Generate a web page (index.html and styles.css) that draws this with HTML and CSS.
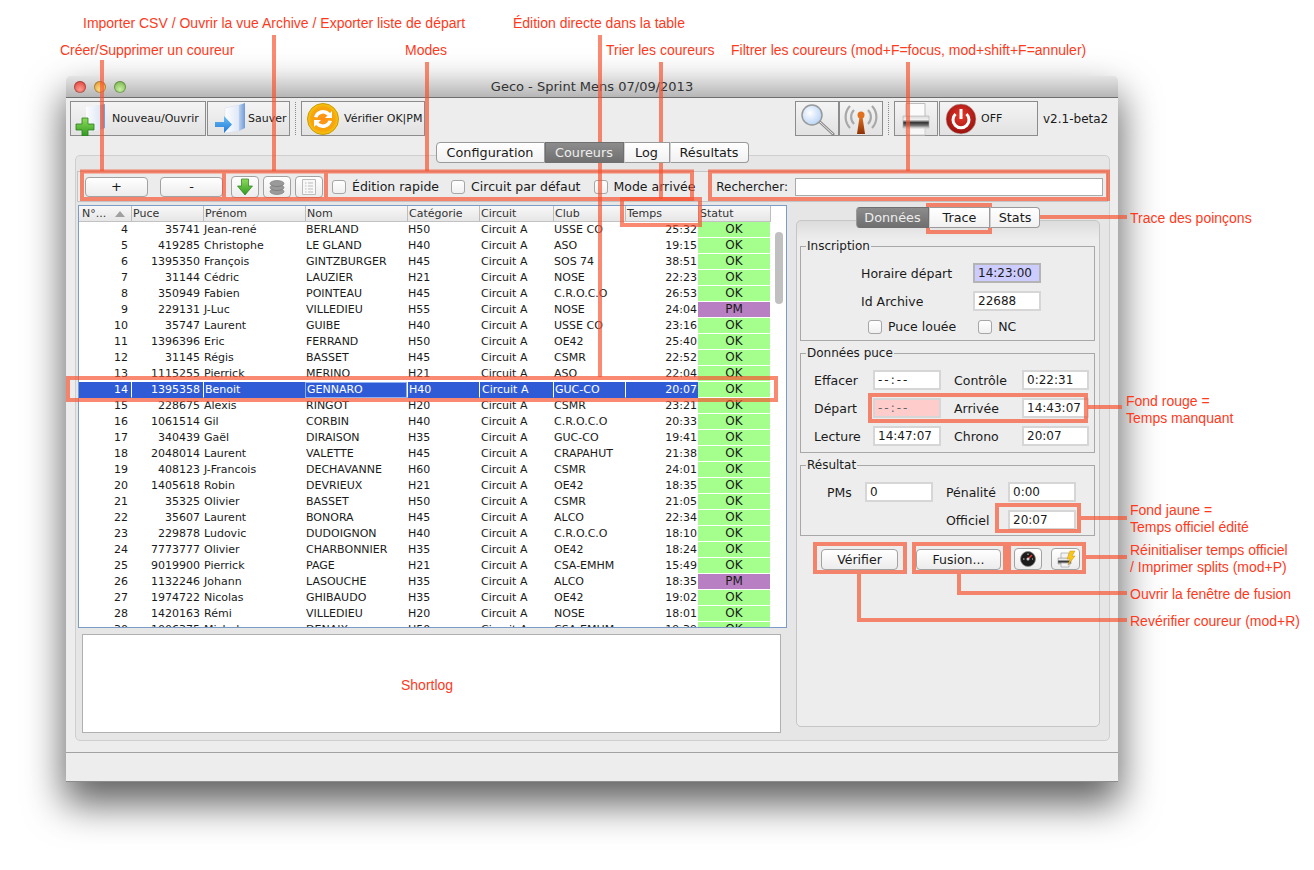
FILE: index.html
```html
<!DOCTYPE html>
<html lang="fr">
  <head>
    <meta charset="UTF-8" />
    <title>Geco - Sprint Mens 07/09/2013</title>
    <link rel="stylesheet" href="styles.css">
  </head>
  <body>
    <svg class="defs" width="0" height="0">
      <defs>
        <linearGradient id="gFolder" x1="0" y1="0" x2="1" y2="0"><stop offset="0" stop-color="#fdfdff"/><stop offset="1" stop-color="#dfe8f6"/></linearGradient>
        <linearGradient id="gSpine" x1="0" y1="0" x2="1" y2="0"><stop offset="0" stop-color="#b9d0ee"/><stop offset="1" stop-color="#6f9ad8"/></linearGradient>
        <linearGradient id="gGreen" x1="0" y1="0" x2="0" y2="1"><stop offset="0" stop-color="#8fdc5a"/><stop offset="1" stop-color="#2f9a22"/></linearGradient>
        <linearGradient id="gBlue" x1="0" y1="0" x2="0" y2="1"><stop offset="0" stop-color="#6cc0f5"/><stop offset="1" stop-color="#1f78d8"/></linearGradient>
        <radialGradient id="gOrange" cx=".5" cy=".5" r=".55"><stop offset="0" stop-color="#ff8f1a"/><stop offset=".7" stop-color="#f7a70c"/><stop offset="1" stop-color="#f6d90e"/></radialGradient>
        <radialGradient id="gRed" cx=".5" cy=".4" r=".6"><stop offset="0" stop-color="#e8392c"/><stop offset="1" stop-color="#98100c"/></radialGradient>
        <radialGradient id="gLens" cx=".4" cy=".4" r=".6"><stop offset="0" stop-color="#ffffff"/><stop offset="1" stop-color="#bcd6f7"/></radialGradient>
        <linearGradient id="gMast" x1="0" y1="0" x2="0" y2="1"><stop offset="0" stop-color="#e0701c"/><stop offset="1" stop-color="#8c3208"/></linearGradient>
        <linearGradient id="gPrinter" x1="0" y1="0" x2="0" y2="1"><stop offset="0" stop-color="#d8d8d8"/><stop offset=".3" stop-color="#f0f0f0"/><stop offset=".55" stop-color="#333"/><stop offset=".8" stop-color="#777"/><stop offset="1" stop-color="#ddd"/></linearGradient>
      </defs>
    </svg>

    <div class="window">
      <div class="titlebar">
        <span class="light red"></span>
        <span class="light orange"></span>
        <span class="light green"></span>
        <span class="title">Geco - Sprint Mens 07/09/2013</span>
      </div>

      <div class="toolbar">
        <button class="tool tool-new">
          <svg width="36" height="34" viewBox="0 0 36 34"><path d="M14 5 L28 3 L28 28 L14 30Z" fill="url(#gFolder)"/><path d="M28 3 L33 2 L33 26 L28 28Z" fill="url(#gSpine)"/><path d="M10 16h6v6h6v6h-6v6h-6v-6H4v-6h6z" fill="url(#gGreen)" stroke="#2a7d1c" stroke-width=".8"/></svg>
          Nouveau/Ouvrir
        </button>
        <button class="tool tool-save">
          <svg width="36" height="34" viewBox="0 0 36 34"><path d="M14 6 L28 3 L28 29 L14 31Z" fill="url(#gFolder)" stroke="#d4dcea" stroke-width=".5"/><path d="M28 3 L34 1 L34 26 L28 29Z" fill="url(#gSpine)"/><path d="M4 20h9v-6l8 8.500-8 8.500v-6H4z" fill="url(#gBlue)"/></svg>
          Sauver
        </button>
        <span class="sep"></span>
        <button class="tool tool-check">
          <svg width="34" height="34" viewBox="0 0 34 34"><circle cx="17" cy="17" r="15.500" fill="url(#gOrange)" stroke="#c99a08"/><path d="M8 15a9.500 9.500 0 0 1 16-4l2-2v7h-7l2.500-2.500a6 6 0 0 0-10 2z" fill="#fff"/><path d="M26 19a9.500 9.500 0 0 1-16 4l-2 2v-7h7l-2.500 2.500a6 6 0 0 0 10-2z" fill="#fff"/></svg>
          Vérifier OK|PM
        </button>
        <div class="toolbar-right">
          <button class="tool tool-icon">
            <svg width="42" height="34" viewBox="0 0 42 34"><path d="M24 20 L37 32" stroke="#8a8a8a" stroke-width="3" stroke-linecap="round"/><path d="M24 20 L37 32" stroke="#eee" stroke-width="1"/><circle cx="16" cy="13" r="10" fill="url(#gLens)" stroke="#999" stroke-width="1.500"/></svg>
          </button>
          <button class="tool tool-icon">
            <svg width="42" height="34" viewBox="0 0 42 34"><g fill="none" stroke="#a8a8a8" stroke-width="2.200"><path d="M14 8a10 10 0 0 0 0 14"/><path d="M28 8a10 10 0 0 1 0 14"/><path d="M10 4a16 16 0 0 0 0 22"/><path d="M32 4a16 16 0 0 1 0 22"/></g><circle cx="21" cy="13" r="3.500" fill="#e0701c"/><path d="M19.500 15h3L25 32H17z" fill="url(#gMast)"/></svg>
          </button>
          <span class="sep"></span>
          <button class="tool tool-icon">
            <svg width="42" height="34" viewBox="0 0 42 34"><path d="M11 1.500h19v13H11z" fill="#fbfbfb" stroke="#bdbdbd"/><path d="M8 14h26v12H8z" fill="url(#gPrinter)" stroke="#b0b0b0" stroke-width=".6"/><path d="M11 26h19v7H11z" fill="#f7f7f7" stroke="#cfcfcf"/></svg>
          </button>
          <button class="tool tool-off">
            <svg width="32" height="32" viewBox="0 0 32 32"><circle cx="16" cy="16" r="15" fill="url(#gRed)" stroke="#b8b8b8" stroke-width=".6"/><path d="M10.500 11a8 8 0 1 0 11 0" fill="none" stroke="#fff" stroke-width="3"/><path d="M16 6v10" stroke="#fff" stroke-width="3"/></svg>
            OFF
          </button>
          <span class="version">v2.1-beta2</span>
        </div>
      </div>

      <div class="tabs tabs-main">
        <span class="tab tab-config">Configuration</span><span class="tab tab-active tab-coureurs">Coureurs</span><span class="tab tab-log">Log</span><span class="tab tab-results">Résultats</span>
      </div>

      <div class="panel">
        <div class="filters">
          <div class="crud">
            <button class="btn btn-crud">+</button>
            <button class="btn btn-crud">-</button>
          </div>
          <div class="io">
            <button class="btn btn-io">
              <svg width="18" height="18" viewBox="0 0 18 18"><path d="M5.500 1h7v7h4L9 17 1.500 8h4z" fill="url(#gGreen)" stroke="#2a7d1c" stroke-width=".7"/></svg>
            </button>
            <button class="btn btn-io">
              <svg width="18" height="18" viewBox="0 0 18 18"><g fill="#9a9a9a" stroke="#707070" stroke-width=".6"><ellipse cx="9" cy="13.500" rx="7" ry="3"/><ellipse cx="9" cy="9.500" rx="7" ry="3"/><ellipse cx="9" cy="5.500" rx="7" ry="3"/></g></svg>
            </button>
            <button class="btn btn-io">
              <svg width="18" height="18" viewBox="0 0 18 18"><path d="M2.500 1.500h13v15h-13z" fill="#f8f8f8" stroke="#bbb"/><path d="M5 5h1.500M8 5h5M5 8h1.500M8 8h5M5 11h1.500M8 11h5M5 14h1.500M8 14h5" stroke="#bdbdbd"/></svg>
            </button>
          </div>
          <label class="check check-fast"><input type="checkbox" />Édition rapide</label>
          <label class="check check-default"><input type="checkbox" />Circuit par défaut</label>
          <label class="check check-arrival"><input type="checkbox" />Mode arrivée</label>
          <label class="search">Rechercher:<input type="text" /></label>
        </div>

        <div class="content">
          <div class="left">
            <div class="runners">
              <table>
                <colgroup>
                  <col class="c-num" /><col class="c-chip" /><col class="c-first" /><col class="c-last" /><col class="c-cat" /><col class="c-course" /><col class="c-club" /><col class="c-time" /><col class="c-status" /><col class="c-fill" />
                </colgroup>
                <thead>
                  <tr><th class="th-num">N°...<span class="sort"></span></th><th>Puce</th><th>Prénom</th><th>Nom</th><th>Catégorie</th><th>Circuit</th><th>Club</th><th>Temps</th><th>Statut</th><th class="th-fill"></th></tr>
                </thead>
                <tbody>
                  <tr><td class="num">4</td><td class="num">35741</td><td>Jean-rené</td><td>BERLAND</td><td>H50</td><td class="crs">Circuit A</td><td>USSE CO</td><td class="time">25:32</td><td class="ok">OK</td><td></td></tr>
                  <tr><td class="num">5</td><td class="num">419285</td><td>Christophe</td><td>LE GLAND</td><td>H40</td><td class="crs">Circuit A</td><td>ASO</td><td class="time">19:15</td><td class="ok">OK</td><td></td></tr>
                  <tr><td class="num">6</td><td class="num">1395350</td><td>François</td><td>GINTZBURGER</td><td>H45</td><td class="crs">Circuit A</td><td>SOS 74</td><td class="time">38:51</td><td class="ok">OK</td><td></td></tr>
                  <tr><td class="num">7</td><td class="num">31144</td><td>Cédric</td><td>LAUZIER</td><td>H21</td><td class="crs">Circuit A</td><td>NOSE</td><td class="time">22:23</td><td class="ok">OK</td><td></td></tr>
                  <tr><td class="num">8</td><td class="num">350949</td><td>Fabien</td><td>POINTEAU</td><td>H45</td><td class="crs">Circuit A</td><td>C.R.O.C.O</td><td class="time">26:53</td><td class="ok">OK</td><td></td></tr>
                  <tr><td class="num">9</td><td class="num">229131</td><td>J-Luc</td><td>VILLEDIEU</td><td>H55</td><td class="crs">Circuit A</td><td>NOSE</td><td class="time">24:04</td><td class="pm">PM</td><td></td></tr>
                  <tr><td class="num">10</td><td class="num">35747</td><td>Laurent</td><td>GUIBE</td><td>H40</td><td class="crs">Circuit A</td><td>USSE CO</td><td class="time">23:16</td><td class="ok">OK</td><td></td></tr>
                  <tr><td class="num">11</td><td class="num">1396396</td><td>Eric</td><td>FERRAND</td><td>H50</td><td class="crs">Circuit A</td><td>OE42</td><td class="time">25:40</td><td class="ok">OK</td><td></td></tr>
                  <tr><td class="num">12</td><td class="num">31145</td><td>Régis</td><td>BASSET</td><td>H45</td><td class="crs">Circuit A</td><td>CSMR</td><td class="time">22:52</td><td class="ok">OK</td><td></td></tr>
                  <tr><td class="num">13</td><td class="num">1115255</td><td>Pierrick</td><td>MERINO</td><td>H21</td><td class="crs">Circuit A</td><td>ASO</td><td class="time">22:04</td><td class="ok">OK</td><td></td></tr>
                  <tr class="selected"><td class="num">14</td><td class="num">1395358</td><td>Benoit</td><td class="focus">GENNARO</td><td>H40</td><td class="crs">Circuit A</td><td>GUC-CO</td><td class="time">20:07</td><td class="ok">OK</td><td></td></tr>
                  <tr><td class="num">15</td><td class="num">228675</td><td>Alexis</td><td>RINGOT</td><td>H20</td><td class="crs">Circuit A</td><td>CSMR</td><td class="time">23:21</td><td class="ok">OK</td><td></td></tr>
                  <tr><td class="num">16</td><td class="num">1061514</td><td>Gil</td><td>CORBIN</td><td>H40</td><td class="crs">Circuit A</td><td>C.R.O.C.O</td><td class="time">20:33</td><td class="ok">OK</td><td></td></tr>
                  <tr><td class="num">17</td><td class="num">340439</td><td>Gaël</td><td>DIRAISON</td><td>H35</td><td class="crs">Circuit A</td><td>GUC-CO</td><td class="time">19:41</td><td class="ok">OK</td><td></td></tr>
                  <tr><td class="num">18</td><td class="num">2048014</td><td>Laurent</td><td>VALETTE</td><td>H45</td><td class="crs">Circuit A</td><td>CRAPAHUT</td><td class="time">21:38</td><td class="ok">OK</td><td></td></tr>
                  <tr><td class="num">19</td><td class="num">408123</td><td>J-Francois</td><td>DECHAVANNE</td><td>H60</td><td class="crs">Circuit A</td><td>CSMR</td><td class="time">24:01</td><td class="ok">OK</td><td></td></tr>
                  <tr><td class="num">20</td><td class="num">1405618</td><td>Robin</td><td>DEVRIEUX</td><td>H21</td><td class="crs">Circuit A</td><td>OE42</td><td class="time">18:35</td><td class="ok">OK</td><td></td></tr>
                  <tr><td class="num">21</td><td class="num">35325</td><td>Olivier</td><td>BASSET</td><td>H50</td><td class="crs">Circuit A</td><td>CSMR</td><td class="time">21:05</td><td class="ok">OK</td><td></td></tr>
                  <tr><td class="num">22</td><td class="num">35607</td><td>Laurent</td><td>BONORA</td><td>H45</td><td class="crs">Circuit A</td><td>ALCO</td><td class="time">22:34</td><td class="ok">OK</td><td></td></tr>
                  <tr><td class="num">23</td><td class="num">229878</td><td>Ludovic</td><td>DUDOIGNON</td><td>H40</td><td class="crs">Circuit A</td><td>C.R.O.C.O</td><td class="time">18:10</td><td class="ok">OK</td><td></td></tr>
                  <tr><td class="num">24</td><td class="num">7773777</td><td>Olivier</td><td>CHARBONNIER</td><td>H35</td><td class="crs">Circuit A</td><td>OE42</td><td class="time">18:24</td><td class="ok">OK</td><td></td></tr>
                  <tr><td class="num">25</td><td class="num">9019900</td><td>Pierrick</td><td>PAGE</td><td>H21</td><td class="crs">Circuit A</td><td>CSA-EMHM</td><td class="time">15:49</td><td class="ok">OK</td><td></td></tr>
                  <tr><td class="num">26</td><td class="num">1132246</td><td>Johann</td><td>LASOUCHE</td><td>H35</td><td class="crs">Circuit A</td><td>ALCO</td><td class="time">18:35</td><td class="pm">PM</td><td></td></tr>
                  <tr><td class="num">27</td><td class="num">1974722</td><td>Nicolas</td><td>GHIBAUDO</td><td>H35</td><td class="crs">Circuit A</td><td>OE42</td><td class="time">19:02</td><td class="ok">OK</td><td></td></tr>
                  <tr><td class="num">28</td><td class="num">1420163</td><td>Rémi</td><td>VILLEDIEU</td><td>H20</td><td class="crs">Circuit A</td><td>NOSE</td><td class="time">18:01</td><td class="ok">OK</td><td></td></tr>
                  <tr><td class="num">30</td><td class="num">1006375</td><td>Michel</td><td>DENAIX</td><td>H50</td><td class="crs">Circuit A</td><td>CSA-EMHM</td><td class="time">19:39</td><td class="ok">OK</td><td></td></tr>
                </tbody>
              </table>
              <div class="thumb"></div>
            </div>
            <div class="shortlog"></div>
          </div>

          <div class="right">
            <div class="tabs tabs-side">
              <span class="tab tab-active tab-data">Données</span><span class="tab tab-trace">Trace</span><span class="tab tab-stats">Stats</span>
            </div>
            <div class="side-panel">
              <fieldset class="group group-reg">
                <legend>Inscription</legend>
                <div class="grid grid-reg">
                  <label>Horaire départ</label><input class="field field-start" value="14:23:00" />
                  <label>Id Archive</label><input class="field" value="22688" />
                </div>
                <div class="reg-checks">
                  <label class="check"><input type="checkbox" />Puce louée</label>
                  <label class="check"><input type="checkbox" />NC</label>
                </div>
              </fieldset>
              <fieldset class="group group-chip">
                <legend>Données puce</legend>
                <div class="grid grid-chip">
                  <label>Effacer</label><input class="field field-empty" value="--:--" />
                  <label class="second">Contrôle</label><input class="field" value="0:22:31" />
                  <label>Départ</label><input class="field field-empty field-missing" value="--:--" />
                  <label class="second">Arrivée</label><input class="field" value="14:43:07" />
                  <label>Lecture</label><input class="field" value="14:47:07" />
                  <label class="second">Chrono</label><input class="field" value="20:07" />
                </div>
              </fieldset>
              <fieldset class="group group-result">
                <legend>Résultat</legend>
                <div class="grid grid-result">
                  <label>PMs</label><input class="field" value="0" />
                  <label class="second">Pénalité</label><input class="field" value="0:00" />
                  <span></span><span></span>
                  <label class="second">Officiel</label><input class="field" value="20:07" />
                </div>
              </fieldset>
              <div class="actions">
                <button class="btn btn-verify">Vérifier</button>
                <button class="btn btn-merge">Fusion...</button>
                <button class="btn btn-small btn-clock">
                  <svg width="18" height="18" viewBox="0 0 18 18"><circle cx="9" cy="9" r="7.500" fill="#1c1c1c" stroke="#888" stroke-width=".8"/><path d="M9 9 L13 5" stroke="#e33" stroke-width="1.400"/><path d="M4 9h1.500M9 3.500V5M13 9h1" stroke="#ddd"/><circle cx="9" cy="9" r="1.500" fill="#ccc"/></svg>
                </button>
                <button class="btn btn-small btn-split">
                  <svg width="20" height="18" viewBox="0 0 20 18"><path d="M5 3h8v6H5z" fill="#f4f4f4" stroke="#999" stroke-width=".6"/><path d="M2 8h13v6H2z" fill="url(#gPrinter)" stroke="#888" stroke-width=".5"/><path d="M5 13h8v4H5z" fill="#f4f4f4" stroke="#999" stroke-width=".6"/><path d="M14 1h5l-3 5h3l-7 9 2-6h-3z" fill="#f8c818" stroke="#d08c10" stroke-width=".5"/></svg>
                </button>
              </div>
            </div>
          </div>
        </div>
      </div>

      <div class="statusbar"></div>
    </div>

    <!-- annotations par dessus la capture -->
    <svg class="marks" width="1314" height="870" viewBox="0 0 1314 870">
      <g class="mark-lines">
        <path d="M102 60V171M274 35V171M427 62V171M600 35V377M661 62V199M908 62V171" />
        <path d="M992 217H1127M1088 407H1122M1081 518H1127M1086 557H1127M959 574V593H1127M859 574V620H1127" />
        <path d="M82 171.500H692V199H82ZM224 171.500V199M326 171.500V199" />
        <path d="M710 171.500H1108V199H710Z" />
        <path d="M622 199H700V225H622Z" />
        <path d="M928 205H990V232H928Z" />
        <path d="M68 378H776V400H68Z" />
        <path d="M870 395H1086V421H870Z" />
        <path d="M997 505H1079V531H997Z" />
        <path d="M815 544H905V572H815Z" />
        <path d="M914 544H1005V572H914Z" />
        <path d="M1009 544H1084V572H1009Z" />
      </g>
    </svg>
    <span class="note n-import">Importer CSV / Ouvrir la vue Archive / Exporter liste de départ</span>
    <span class="note n-edit">Édition directe dans la table</span>
    <span class="note n-create">Créer/Supprimer un coureur</span>
    <span class="note n-modes">Modes</span>
    <span class="note n-sort">Trier les coureurs</span>
    <span class="note n-filter">Filtrer les coureurs (mod+F=focus, mod+shift+F=annuler)</span>
    <span class="note n-trace">Trace des poinçons</span>
    <span class="note n-red">Fond rouge =<br />Temps manquant</span>
    <span class="note n-yellow">Fond jaune =<br />Temps officiel édité</span>
    <span class="note n-reset">Réinitialiser temps officiel<br />/ Imprimer splits (mod+P)</span>
    <span class="note n-merge">Ouvrir la fenêtre de fusion</span>
    <span class="note n-recheck">Revérifier coureur (mod+R)</span>
    <span class="note n-shortlog">Shortlog</span>
  </body>
</html>
```

FILE: styles.css
```css
html,
body {
  margin: 0;
  padding: 0;
}

body {
  position: relative;
  width: 1314px;
  height: 870px;
  overflow: hidden;
  background: #fff;
  font-family: "DejaVu Sans", sans-serif;
  color: #1a1a1a;
}

.defs {
  position: absolute;
}

button {
  font-family: inherit;
  color: inherit;
  padding: 0;
}

/* WINDOW */

.window {
  position: absolute;
  left: 66px;
  top: 76px;
  width: 1052px;
  height: 706px;
  box-sizing: border-box;
  display: flex;
  flex-direction: column;
  background: #ededed;
  border-radius: 5px 5px 0 0;
  box-shadow: 0 20px 38px 2px rgba(0, 0, 0, 0.62);
}

.titlebar {
  position: relative;
  flex: none;
  height: 21px;
  display: flex;
  align-items: center;
  gap: 8px;
  padding-left: 8px;
  background: linear-gradient(#e4e4e4, #b6b6b6);
  border-bottom: 1px solid #6e6e6e;
  border-radius: 5px 5px 0 0;
}

.light {
  width: 12px;
  height: 12px;
  border-radius: 50%;
  box-shadow: inset 0 0 0 1px rgba(0, 0, 0, 0.25);
}

.red {
  background: radial-gradient(circle at 50% 70%, #ff9a90, #d8332a);
}

.orange {
  background: radial-gradient(circle at 50% 70%, #ffe08a, #d98a1c);
}

.green {
  background: radial-gradient(circle at 50% 70%, #c8f0a0, #68a83c);
}

.title {
  position: absolute;
  left: 0;
  right: 0;
  text-align: center;
  font-size: 13px;
  color: #333;
}

/* TOOLBAR */

.toolbar {
  flex: none;
  height: 35px;
  margin-top: 3px;
  padding-left: 4px;
  display: flex;
  align-items: stretch;
}

.toolbar-right {
  display: flex;
  align-items: stretch;
  margin-left: auto;
}

.tool {
  display: flex;
  align-items: center;
  box-sizing: border-box;
  height: 35px;
  font-size: 11px;
  border: 1px solid #8c8c8c;
  background: linear-gradient(#f4f4f4, #e2e2e2);
  white-space: nowrap;
}

.tool-new {
  width: 136px;
  gap: 4px;
  padding-left: 1px;
}

.tool-save {
  width: 83px;
  gap: 1px;
  padding-left: 3px;
  margin-left: 1px;
}

.tool-check {
  width: 124px;
  gap: 4px;
  padding-left: 4px;
}

.tool-icon {
  width: 44px;
  justify-content: center;
  padding: 0;
}

.tool-off {
  width: 99px;
  gap: 4px;
  padding-left: 5px;
  margin-left: 1px;
}

.sep {
  width: 0;
  margin: 1px 5px;
  border-left: 1px dotted #8a8a8a;
}

.version {
  width: 80px;
  padding-left: 5px;
  box-sizing: border-box;
  align-self: center;
  font-size: 12px;
}

/* TABS */

.tabs {
  display: flex;
  justify-content: center;
  position: relative;
  z-index: 1;
  font-size: 12.8px;
}

.tabs-main {
  height: 21px;
  margin-top: 6px;
}

.tab {
  box-sizing: border-box;
  display: flex;
  align-items: center;
  justify-content: center;
  height: 21px;
  background: linear-gradient(#fff, #f1f1f1);
  border: 1px solid #9a9a9a;
  border-left: 1px solid #d0d0d0;
}

.tab:first-child {
  border-left: 1px solid #9a9a9a;
  border-radius: 4px 0 0 4px;
}

.tab:last-child {
  border-radius: 0 4px 4px 0;
}

.tab-active {
  color: #eee;
  background: linear-gradient(#8c8c8c, #6f6f6f);
  border-color: #6f6f6f;
}

.tab-config { width: 109px; }
.tab-coureurs { width: 79px; }
.tab-log { width: 46px; }
.tab-results { width: 79px; }
.tab-data { width: 73px; }
.tab-trace { width: 61px; }
.tab-stats { width: 50px; }

/* PANEL */

.panel {
  flex: none;
  box-sizing: border-box;
  width: 1035px;
  height: 586px;
  margin: -8px 0 0 9px;
  padding: 15px 1px 0;
  background: #e6e6e6;
  border: 1px solid #cfcfcf;
  border-radius: 5px;
}

.filters {
  display: flex;
  align-items: center;
  box-sizing: border-box;
  height: 31px;
  width: 1031px;
  background: #ececec;
  border: 1px solid #c4c4c4;
  font-size: 12.5px;
}

.crud {
  display: flex;
  gap: 12px;
  margin-left: 7px;
}

.btn {
  box-sizing: border-box;
  display: flex;
  align-items: center;
  justify-content: center;
  background: linear-gradient(#fff, #ececec);
  border: 1px solid #a2a2a2;
  border-radius: 4px;
  font-size: 12.5px;
}

.btn-crud {
  width: 63px;
  height: 20px;
  font-size: 13px;
}

.io {
  display: flex;
  gap: 4px;
  margin-left: 8px;
}

.btn-io {
  width: 28px;
  height: 22px;
}

.check {
  display: flex;
  align-items: center;
  gap: 6px;
  white-space: nowrap;
}

input[type="checkbox"] {
  appearance: none;
  box-sizing: border-box;
  flex: none;
  width: 14px;
  height: 14px;
  margin: 0;
  background: linear-gradient(#fff, #f0f0f0);
  border: 1px solid #a6a6a6;
  border-radius: 3px;
}

.check-fast { margin-left: 9px; }
.check-default { margin-left: 12px; }
.check-arrival { margin-left: 13px; }

.search {
  flex: none;
  display: flex;
  align-items: center;
  gap: 7px;
  margin-left: auto;
  margin-right: 4px;
  font-size: 12px;
  white-space: nowrap;
}

.search input {
  box-sizing: border-box;
  width: 308px;
  height: 18px;
  border: 1px solid #aaa;
  background: #fff;
}

/* TABLE */

.content {
  display: flex;
  gap: 9px;
  margin-top: 3px;
}

.left {
  width: 709px;
  margin-left: 1px;
}

.runners {
  position: relative;
  box-sizing: border-box;
  height: 423px;
  overflow: hidden;
  background: #fff;
  border: 1px solid #7c9cc8;
}

.runners table {
  table-layout: fixed;
  width: 707px;
  border-spacing: 0;
  font-size: 11px;
}

.c-num { width: 52px; }
.c-chip { width: 72px; }
.c-first { width: 102px; }
.c-last { width: 102px; }
.c-cat { width: 72px; }
.c-course { width: 74px; }
.c-club { width: 72px; }
.c-time { width: 73px; }
.c-status { width: 72px; }
.c-fill { width: 16px; }

.runners th {
  height: 15px;
  padding: 0 0 0 2px;
  text-align: left;
  font-weight: normal;
  color: #333;
  line-height: 15px;
  background: linear-gradient(#f8f8f8, #e6e6e6);
  border-bottom: 1px solid #c2c2c2;
  box-shadow: inset 1px 0 0 #bdbdbd;
}

.runners th.th-num {
  position: relative;
  padding-left: 3px;
  box-shadow: none;
}

.runners th.th-fill {
  background: #fff;
  border-bottom: none;
  box-shadow: inset 1px 0 0 #bdbdbd;
}

.sort {
  position: absolute;
  left: 36px;
  top: 5px;
  width: 0;
  height: 0;
  border: 5px solid transparent;
  border-top: none;
  border-bottom: 6px solid #a0a0a0;
}

.runners td {
  box-sizing: border-box;
  height: 16px;
  padding: 0 0 0 1px;
  line-height: 15px;
  white-space: nowrap;
  overflow: visible;
  border-bottom: 1px solid transparent;
}

.runners td.num {
  padding: 0 3px 0 0;
  text-align: right;
}

.runners td.crs {
  padding-left: 2px;
}

.runners td.time {
  padding: 0 1px 0 0;
  text-align: right;
}

.runners td.ok,
.runners td.pm {
  padding: 0;
  text-align: center;
  font-size: 12px;
  border-bottom: 1px solid #fff;
}

.runners .ok {
  background: #a4ff8c;
}

.runners .pm {
  background: #b97fc3;
}

.selected td {
  color: #fff;
  background: #2f5cd6;
  border-left: 1px solid #fff;
}

.selected td:first-child {
  border-left: none;
}

.selected td:last-child {
  background: none;
  border-left: none;
}

.selected td.focus {
  border: 1px solid #8fb0ee;
  line-height: 14px;
}

.runners .selected td.ok {
  color: #1a1a1a;
  background: #a4ff8c;
  border-left: none;
}

.thumb {
  position: absolute;
  left: 696px;
  top: 26px;
  width: 8px;
  height: 72px;
  border-radius: 4px;
  background: #c0c0c0;
}

.shortlog {
  box-sizing: border-box;
  width: 699px;
  height: 99px;
  margin: 6px 0 0 4px;
  background: #fff;
  border: 1px solid #b0b0b0;
}

/* SIDE PANEL */

.right {
  width: 304px;
  margin-top: 2px;
}

.tabs-side {
  margin-bottom: -8px;
}

.side-panel {
  box-sizing: border-box;
  height: 507px;
  padding: 18px 4px 0 3px;
  background: linear-gradient(#dcdcdc, #ededed 18px);
  border: 1px solid #c6c6c6;
  border-radius: 5px;
}

.group {
  box-sizing: border-box;
  width: 295px;
  margin: 0 0 5px;
  padding: 10px 0 0;
  min-width: 0;
  border: 1px solid #a8a8a8;
  font-size: 12.5px;
}

.group legend {
  height: 14px;
  line-height: 14px;
  margin-left: 5px;
  padding: 0 1px;
  font-size: 12px;
}

.group-reg { height: 102px; }
.group-chip { height: 107px; }
.group-result { height: 78px; }

.grid {
  display: grid;
  grid-auto-rows: 20px;
  row-gap: 8px;
  align-items: center;
}

.grid-reg {
  grid-template-columns: 112px 68px;
  padding-left: 60px;
}

.reg-checks {
  display: flex;
  gap: 22px;
  margin: 8px 0 0 67px;
}

.grid-chip {
  grid-template-columns: 59px 68px 81px 67px;
  padding-left: 13px;
}

.grid-result {
  grid-template-columns: 38px 68px 75px 68px;
  padding-left: 26px;
}

.second {
  padding-left: 13px;
}

.field {
  box-sizing: border-box;
  width: 100%;
  height: 20px;
  padding: 0 0 0 3px;
  font-family: inherit;
  font-size: 12px;
  color: #1a1a1a;
  background: #fff;
  border: 2px solid #d6d6d6;
}

.field-empty {
  letter-spacing: 2px;
}

.field-start {
  background: #ccccff;
  border-color: #b4b4b4;
}

.field-missing {
  color: #666;
  background: #ffcccc;
}

.actions {
  display: flex;
  align-items: center;
  height: 22px;
  margin-top: 12px;
  font-size: 12.5px;
}

.btn-verify {
  width: 77px;
  height: 21px;
  margin-left: 21px;
}

.btn-merge {
  width: 85px;
  height: 21px;
  margin-left: 18px;
}

.btn-small {
  width: 28px;
  height: 22px;
  margin-left: 13px;
}

.btn-split {
  width: 29px;
  margin-left: 9px;
}

.statusbar {
  flex: none;
  box-sizing: border-box;
  height: 30px;
  margin-top: 11px;
  background: #ededed;
  border-top: 1px solid #a2a2a2;
  border-bottom: 1px solid #8c8c8c;
}

/* ANNOTATIONS */

.marks {
  position: absolute;
  left: 0;
  top: 0;
  pointer-events: none;
}

.mark-lines {
  fill: none;
  stroke: #f8512f;
  stroke-width: 4;
  stroke-opacity: 0.68;
}

.note {
  position: absolute;
  font-family: "Liberation Sans", Arial, sans-serif;
  font-size: 14px;
  line-height: 17px;
  color: #ff3a1c;
  white-space: nowrap;
}

.n-import { left: 83px; top: 15px; }
.n-edit { left: 513px; top: 15px; }
.n-create { left: 60px; top: 42px; }
.n-modes { left: 405px; top: 42px; }
.n-sort { left: 606px; top: 42px; }
.n-filter { left: 731px; top: 42px; }
.n-trace { left: 1130px; top: 210px; }
.n-red { left: 1126px; top: 393px; }
.n-yellow { left: 1130px; top: 502px; }
.n-reset { left: 1130px; top: 542px; }
.n-merge { left: 1130px; top: 586px; }
.n-recheck { left: 1130px; top: 613px; }
.n-shortlog { left: 401px; top: 677px; }
```
